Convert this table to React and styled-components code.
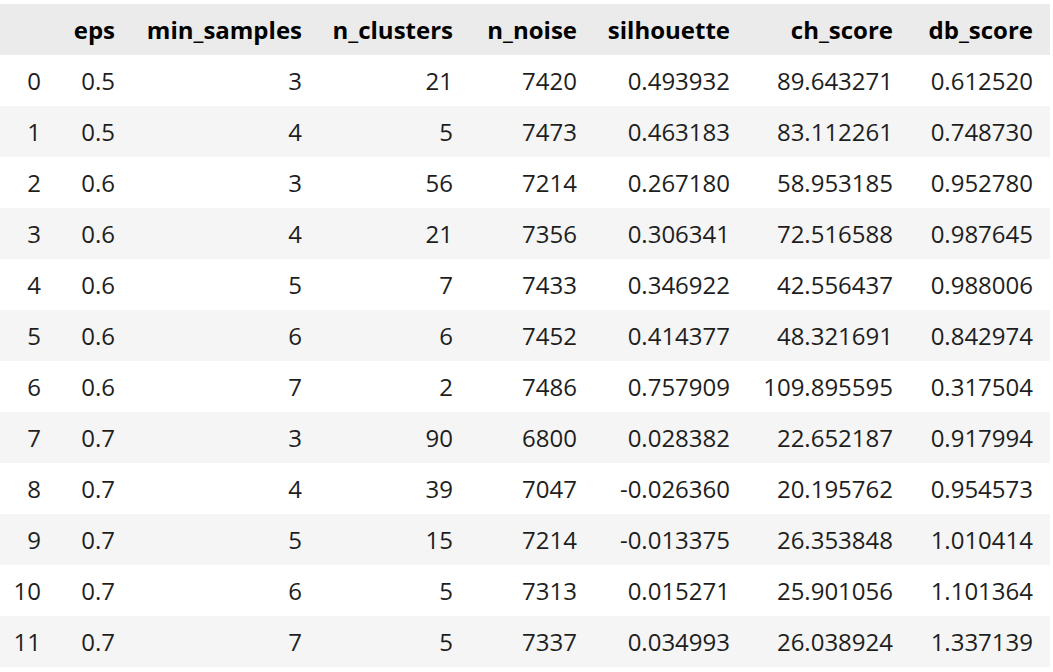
import React from "react";
import styled, { createGlobalStyle } from "styled-components";

const Global = createGlobalStyle`
  html, body { margin: 0; padding: 0; background: #ffffff; }
  body { padding-top: 4px; font-family: "Open Sans", "Noto Sans", sans-serif; }
  *, *::before, *::after { box-sizing: border-box; }
`;

const Table = styled.table`
  border-collapse: collapse;
  border-spacing: 0;
  table-layout: fixed;
  width: 1050px;
  font-family: "Open Sans", "Noto Sans", sans-serif;
  font-size: 24px;
  color: #1e1e1e;
`;

const HeadRow = styled.tr`
  background: #ebebeb;
  height: 51px;
`;

const HeadCell = styled.th`
  width: ${(p) => p.$w}px;
  text-align: right;
  font-weight: 700;
  color: #000;
  padding: 0 17px 0 0;
  vertical-align: middle;
  white-space: nowrap;
`;

const BodyRow = styled.tr`
  height: 51px;
  background: ${(p) => (p.$odd ? "#f5f5f5" : "#ffffff")};
`;

const IndexCell = styled.th`
  text-align: right;
  font-weight: 400;
  color: #1e1e1e;
  padding: 0 17px 0 0;
  vertical-align: middle;
`;

const Cell = styled.td`
  text-align: right;
  padding: 0 17px 0 0;
  vertical-align: middle;
  white-space: nowrap;
`;

const columns = [
  { key: "", w: 58 },
  { key: "eps", w: 74 },
  { key: "min_samples", w: 187 },
  { key: "n_clusters", w: 151 },
  { key: "n_noise", w: 124 },
  { key: "silhouette", w: 153 },
  { key: "ch_score", w: 163 },
  { key: "db_score", w: 140 },
];

const rows = [
  ["0.5", "3", "21", "7420", "0.493932", "89.643271", "0.612520"],
  ["0.5", "4", "5", "7473", "0.463183", "83.112261", "0.748730"],
  ["0.6", "3", "56", "7214", "0.267180", "58.953185", "0.952780"],
  ["0.6", "4", "21", "7356", "0.306341", "72.516588", "0.987645"],
  ["0.6", "5", "7", "7433", "0.346922", "42.556437", "0.988006"],
  ["0.6", "6", "6", "7452", "0.414377", "48.321691", "0.842974"],
  ["0.6", "7", "2", "7486", "0.757909", "109.895595", "0.317504"],
  ["0.7", "3", "90", "6800", "0.028382", "22.652187", "0.917994"],
  ["0.7", "4", "39", "7047", "-0.026360", "20.195762", "0.954573"],
  ["0.7", "5", "15", "7214", "-0.013375", "26.353848", "1.010414"],
  ["0.7", "6", "5", "7313", "0.015271", "25.901056", "1.101364"],
  ["0.7", "7", "5", "7337", "0.034993", "26.038924", "1.337139"],
];

export default function App() {
  return (
    <>
      <Global />
      <Table>
        <thead>
          <HeadRow>
            {columns.map((c, i) => (
              <HeadCell key={i} $w={c.w}>{c.key}</HeadCell>
            ))}
          </HeadRow>
        </thead>
        <tbody>
          {rows.map((r, i) => (
            <BodyRow key={i} $odd={i % 2 === 1}>
              <IndexCell>{i}</IndexCell>
              {r.map((v, j) => (
                <Cell key={j}>{v}</Cell>
              ))}
            </BodyRow>
          ))}
        </tbody>
      </Table>
    </>
  );
}
